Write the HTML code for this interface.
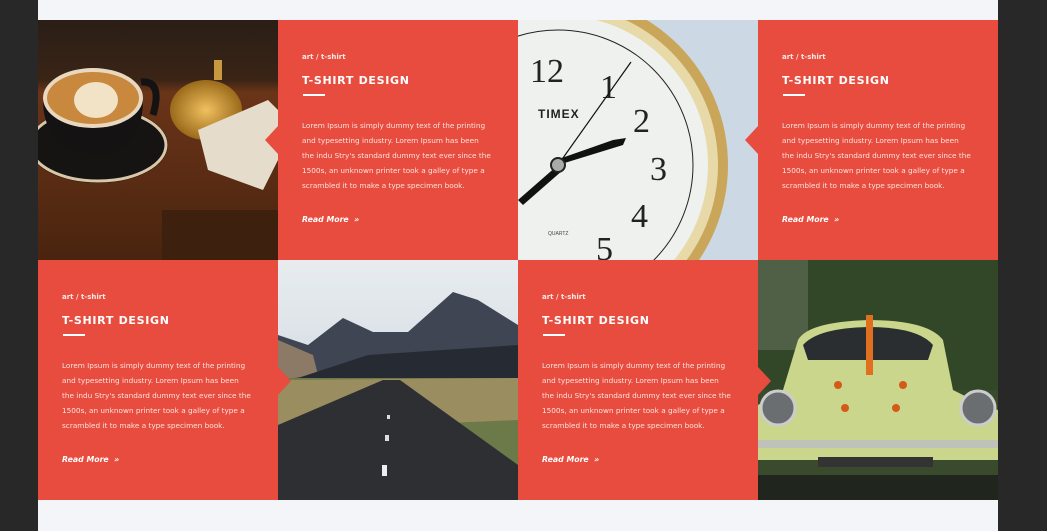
<!DOCTYPE html>
<html><head><meta charset="utf-8">
<style>
*{margin:0;padding:0;box-sizing:border-box}
html,body{width:1047px;height:531px;overflow:hidden;background:#282828;font-family:"Liberation Sans",sans-serif}
.page{position:absolute;left:38px;top:0;width:960px;height:531px;background:#f4f5f9}
.cell{position:absolute;width:240px;height:240px;overflow:visible}
.red{background:#e74c3e;color:#fff;padding:0 0 0 24px;z-index:2}
.cat{position:absolute;left:24px;top:33px;font-family:"DejaVu Sans",sans-serif;font-size:7px;font-weight:bold;color:#fbe9e6}
.ttl{position:absolute;left:24px;top:54px;font-family:"DejaVu Sans",sans-serif;font-size:11px;font-weight:bold;letter-spacing:.7px;color:#fff}
.bar{position:absolute;left:25px;top:74px;width:22px;height:2px;background:#fff}
.txt{position:absolute;left:24px;top:98px;white-space:nowrap;font-family:"DejaVu Sans",sans-serif;font-size:7.3px;line-height:15px;color:#fde3df}
.rm{position:absolute;left:24px;top:195px;font-family:"DejaVu Sans",sans-serif;font-size:7.8px;font-weight:bold;font-style:italic;color:#fff}
.arr{position:absolute;width:0;height:0;border-top:14px solid transparent;border-bottom:14px solid transparent}
.al{left:-13px;top:106px;border-right:13px solid #e74c3e}
.ar{right:-13px;top:107px;border-left:13px solid #e74c3e}
svg{display:block}
</style></head><body>
<div class="page">
<div class="cell" style="left:0;top:20px">
<svg width="240" height="240"><defs>
<linearGradient id="w" x1="0" y1="0" x2="0" y2="1"><stop offset="0" stop-color="#2a1e16"/><stop offset=".25" stop-color="#3a2416"/><stop offset=".3" stop-color="#6a3418"/><stop offset="1" stop-color="#4a240f"/></linearGradient>
<radialGradient id="g"><stop offset="0" stop-color="#f0c060"/><stop offset="1" stop-color="#9a6a1a"/></radialGradient></defs>
<rect width="240" height="240" fill="url(#w)"/>
<rect x="124" y="190" width="116" height="50" fill="#3e200e"/>
<ellipse cx="60" cy="125" rx="70" ry="38" fill="#161412"/>
<ellipse cx="60" cy="125" rx="68" ry="36" fill="none" stroke="#d9c7a8" stroke-width="3"/>
<path d="M5 80 Q5 130 60 135 Q105 130 105 80 Z" fill="#141212"/>
<ellipse cx="55" cy="78" rx="50" ry="30" fill="#e8d8c0"/>
<ellipse cx="55" cy="78" rx="46" ry="26" fill="#c8893f"/>
<ellipse cx="58" cy="80" rx="22" ry="18" fill="#f2e2c6"/>
<path d="M103 62 Q125 60 115 95" stroke="#141212" stroke-width="7" fill="none"/>
<ellipse cx="168" cy="90" rx="36" ry="30" fill="url(#g)"/>
<rect x="176" y="40" width="8" height="20" fill="#c89a40"/>
<path d="M160 110 L230 80 L240 90 L240 140 L225 170 L170 150 Z" fill="#e6dccc"/>
</svg></div>
<div class="cell red" style="left:240px;top:20px"><div class="arr al"></div>
<div class="cat">art / t-shirt</div><div class="ttl">T-SHIRT DESIGN</div><div class="bar"></div>
<div class="txt">Lorem Ipsum is simply dummy text of the printing<br>and typesetting industry. Lorem Ipsum has been<br>the indu Stry's standard dummy text ever since the<br>1500s, an unknown printer took a galley of type a<br>scrambled it to make a type specimen book.</div>
<div class="rm">Read More &nbsp;»</div></div>
<div class="cell" style="left:480px;top:20px;z-index:1">
<svg width="240" height="240"><rect width="240" height="240" fill="#ccd8e4"/>
<circle cx="40" cy="145" r="170" fill="#c9a65a"/>
<circle cx="40" cy="145" r="160" fill="#e8d9a8"/>
<circle cx="40" cy="145" r="150" fill="#eef1ee"/>
<circle cx="40" cy="145" r="135" fill="none" stroke="#222" stroke-width="1"/>
<text x="12" y="62" font-family="Liberation Serif" font-size="34" fill="#222">12</text>
<text x="82" y="78" font-family="Liberation Serif" font-size="34" fill="#222">1</text>
<text x="115" y="112" font-family="Liberation Serif" font-size="34" fill="#222">2</text>
<text x="132" y="160" font-family="Liberation Serif" font-size="34" fill="#222">3</text>
<text x="113" y="207" font-family="Liberation Serif" font-size="34" fill="#222">4</text>
<text x="78" y="240" font-family="Liberation Serif" font-size="34" fill="#222">5</text>
<text x="20" y="98" font-size="12" font-weight="bold" fill="#222" letter-spacing="1">TIMEX</text>
<text x="30" y="215" font-size="5" fill="#444">QUARTZ</text>
<line x1="40" y1="145" x2="113" y2="42" stroke="#111" stroke-width="1.2"/>
<path d="M40 145 L105 125 L108 118 L95 120 L38 140 Z" fill="#111"/>
<path d="M40 145 L0 180 L5 185 L45 150 Z" fill="#111"/>
<circle cx="40" cy="145" r="7" fill="#aaa" stroke="#222" stroke-width="2"/>
</svg></div>
<div class="cell red" style="left:720px;top:20px"><div class="arr al"></div>
<div class="cat">art / t-shirt</div><div class="ttl">T-SHIRT DESIGN</div><div class="bar"></div>
<div class="txt">Lorem Ipsum is simply dummy text of the printing<br>and typesetting industry. Lorem Ipsum has been<br>the indu Stry's standard dummy text ever since the<br>1500s, an unknown printer took a galley of type a<br>scrambled it to make a type specimen book.</div>
<div class="rm">Read More &nbsp;»</div></div>
<div class="cell red" style="left:0;top:260px"><div class="arr ar"></div>
<div class="cat">art / t-shirt</div><div class="ttl">T-SHIRT DESIGN</div><div class="bar"></div>
<div class="txt">Lorem Ipsum is simply dummy text of the printing<br>and typesetting industry. Lorem Ipsum has been<br>the indu Stry's standard dummy text ever since the<br>1500s, an unknown printer took a galley of type a<br>scrambled it to make a type specimen book.</div>
<div class="rm">Read More &nbsp;»</div></div>
<div class="cell" style="left:240px;top:260px;z-index:1">
<svg width="240" height="240"><defs><linearGradient id="s" x1="0" y1="0" x2="0" y2="1"><stop offset="0" stop-color="#e8ecef"/><stop offset="1" stop-color="#c4d0da"/></linearGradient></defs>
<rect width="240" height="240" fill="url(#s)"/>
<path d="M0 75 L30 85 L65 58 L95 72 L130 72 L175 32 L200 40 L240 65 L240 120 L0 120 Z" fill="#3f4552"/>
<path d="M0 80 L35 95 L40 115 L0 120Z" fill="#8c7a66"/>
<path d="M20 118 L90 95 L240 85 L240 120 Z" fill="#262a33"/>
<rect y="118" width="240" height="122" fill="#6b7a48"/>
<path d="M0 120 L240 118 L240 160 L0 170 Z" fill="#9a8e60"/>
<path d="M105 120 L122 120 L240 205 L240 240 L0 240 L0 165 Z" fill="#2e2f33"/>
<rect x="109" y="155" width="3" height="4" fill="#ddd"/><rect x="107" y="175" width="4" height="6" fill="#ddd"/><rect x="104" y="205" width="5" height="11" fill="#eee"/>
</svg></div>
<div class="cell red" style="left:480px;top:260px"><div class="arr ar"></div>
<div class="cat">art / t-shirt</div><div class="ttl">T-SHIRT DESIGN</div><div class="bar"></div>
<div class="txt">Lorem Ipsum is simply dummy text of the printing<br>and typesetting industry. Lorem Ipsum has been<br>the indu Stry's standard dummy text ever since the<br>1500s, an unknown printer took a galley of type a<br>scrambled it to make a type specimen book.</div>
<div class="rm">Read More &nbsp;»</div></div>
<div class="cell" style="left:720px;top:260px">
<svg width="240" height="240"><rect width="240" height="240" fill="#3a4a2c"/>
<rect width="50" height="90" fill="#9aa090"/>
<path d="M0 0 L240 0 L240 130 L0 130Z" fill="#2f4526" opacity=".7"/>
<path d="M40 80 Q50 62 110 60 Q170 60 185 80 L195 130 L225 145 L240 150 L240 200 L0 200 L0 145 L25 130 Z" fill="#c9d68c"/>
<path d="M45 85 Q60 68 110 67 Q160 67 175 85 L170 100 L50 100 Z" fill="#2a2e30"/>
<rect x="108" y="55" width="7" height="60" fill="#e07020"/>
<circle cx="80" cy="125" r="4" fill="#d45a18"/><circle cx="145" cy="125" r="4" fill="#d45a18"/><circle cx="87" cy="148" r="4" fill="#d45a18"/><circle cx="138" cy="148" r="4" fill="#d45a18"/>
<circle cx="20" cy="148" r="17" fill="#6a6e70" stroke="#ccc" stroke-width="3"/>
<circle cx="220" cy="148" r="17" fill="#6a6e70" stroke="#ccc" stroke-width="3"/>
<rect y="180" width="240" height="8" fill="#bfc2b8"/>
<rect x="60" y="197" width="115" height="10" fill="#333"/>
<rect y="215" width="240" height="25" fill="#20261e"/>
</svg></div>
</div>
</body></html>
